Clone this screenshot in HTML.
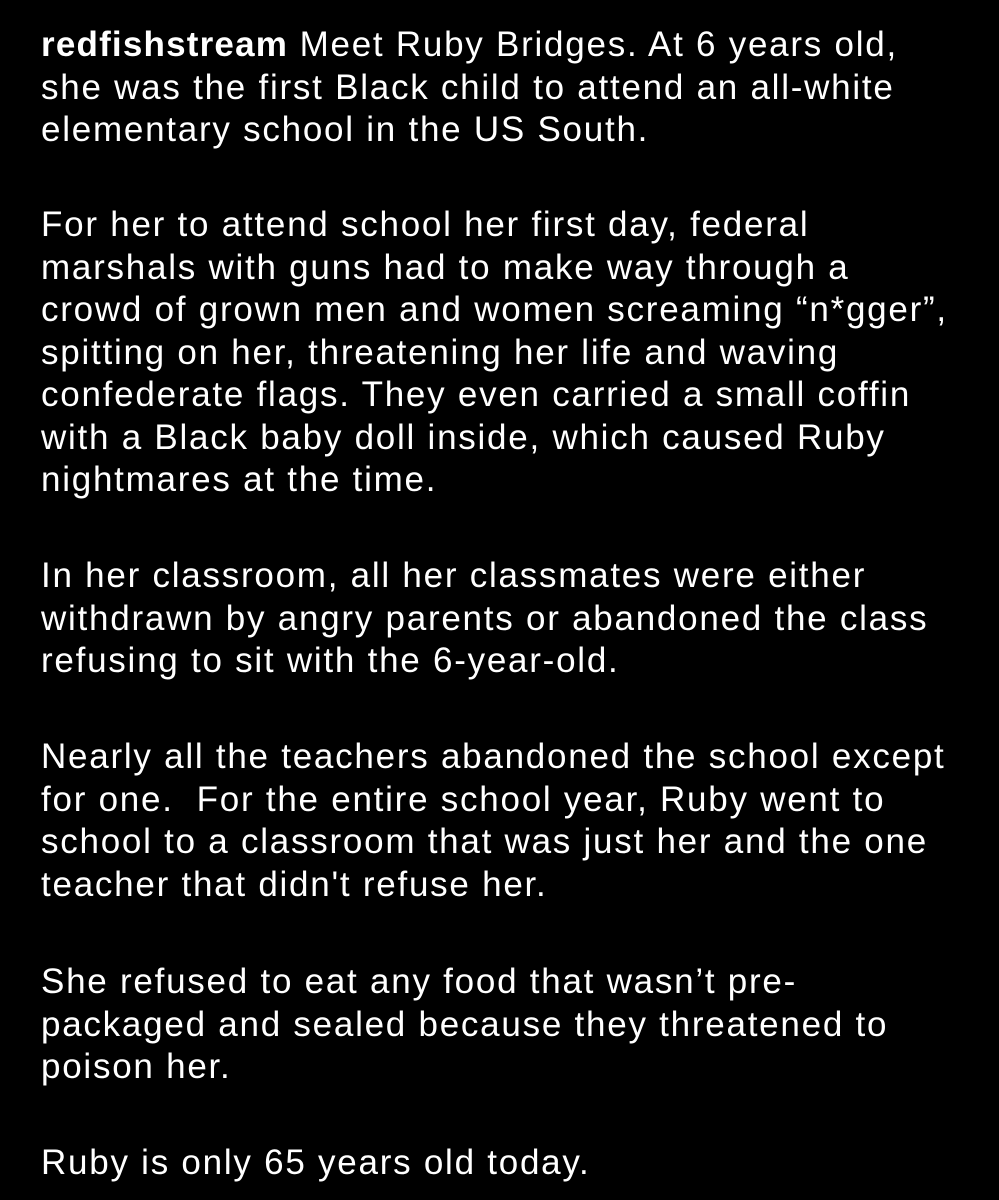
<!DOCTYPE html>
<html><head><meta charset="utf-8"><style>
html,body{margin:0;padding:0;background:#000;width:999px;height:1200px;overflow:hidden}
.t{position:absolute;left:41px;top:-1px;color:#fff;font-family:"Liberation Sans",sans-serif;font-size:35px;letter-spacing:1.75px;white-space:nowrap}
.l{position:absolute;left:0;line-height:1}
b{font-weight:bold;letter-spacing:1.2px}
</style></head><body>
<div class="t">
<div class="l" style="top:28px"><b>redfishstream</b> Meet Ruby Bridges. At 6 years old,</div>
<div class="l" style="top:71px">she was the first Black child to attend an all-white</div>
<div class="l" style="top:113px">elementary school in the US South.</div>
<div class="l" style="top:208px">For her to attend school her first day, federal</div>
<div class="l" style="top:251px">marshals with guns had to make way through a</div>
<div class="l" style="top:293px">crowd of grown men and women screaming “n*gger”,</div>
<div class="l" style="top:336px">spitting on her, threatening her life and waving</div>
<div class="l" style="top:378px">confederate flags. They even carried a small coffin</div>
<div class="l" style="top:421px">with a Black baby doll inside, which caused Ruby</div>
<div class="l" style="top:463px">nightmares at the time.</div>
<div class="l" style="top:559px">In her classroom, all her classmates were either</div>
<div class="l" style="top:602px">withdrawn by angry parents or abandoned the class</div>
<div class="l" style="top:644px">refusing to sit with the 6-year-old.</div>
<div class="l" style="top:740px">Nearly all the teachers abandoned the school except</div>
<div class="l" style="top:783px">for one.&nbsp; For the entire school year, Ruby went to</div>
<div class="l" style="top:825px">school to a classroom that was just her and the one</div>
<div class="l" style="top:868px">teacher that didn't refuse her.</div>
<div class="l" style="top:965px">She refused to eat any food that wasn’t pre-</div>
<div class="l" style="top:1008px">packaged and sealed because they threatened to</div>
<div class="l" style="top:1050px">poison her.</div>
<div class="l" style="top:1146px">Ruby is only 65 years old today.</div>
</div>
</body></html>
